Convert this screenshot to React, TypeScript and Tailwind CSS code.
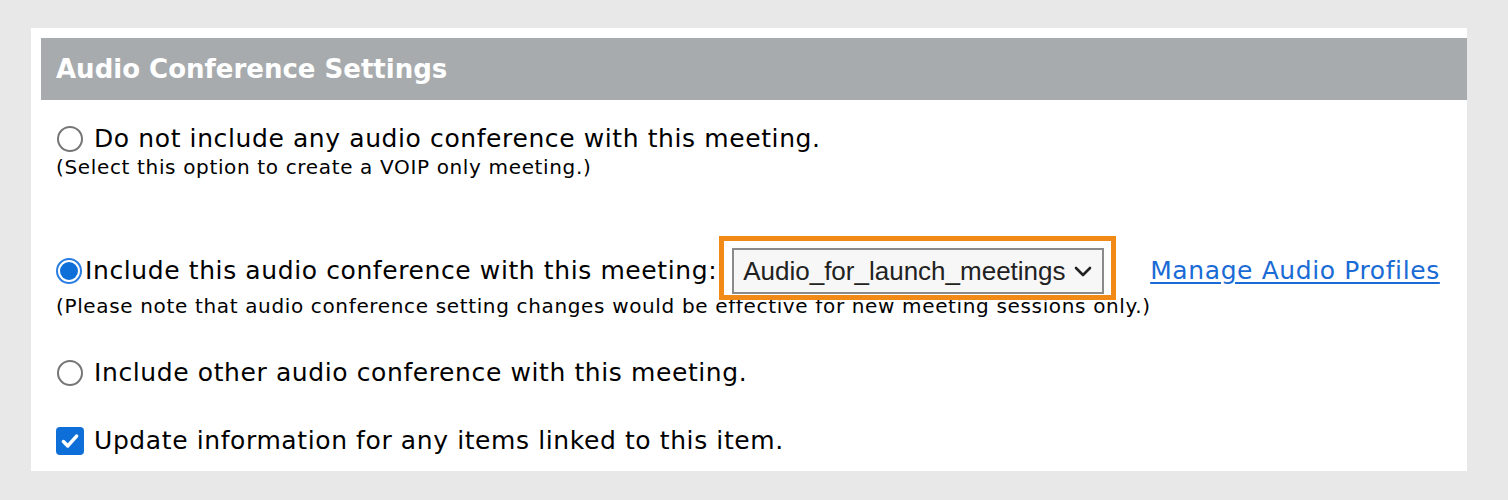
import React from "react";

const Radio = ({ checked = false }: { checked?: boolean }) =>
  checked ? (
    <span className="inline-flex h-[26px] w-[26px] shrink-0 items-center justify-center rounded-full border-[2px] border-[#2a7de1] bg-white">
      <span className="h-[18px] w-[18px] rounded-full bg-[#0f6fd8]" />
    </span>
  ) : (
    <span className="inline-block h-[26px] w-[26px] shrink-0 rounded-full border-[2px] border-[#767676] bg-white" />
  );

const Checkbox = () => (
  <span className="inline-flex h-[28px] w-[28px] shrink-0 items-center justify-center rounded-[4px] bg-[#0f6fd8]">
    <svg width="22" height="22" viewBox="0 0 20 20" fill="none">
      <path d="M4 10.5l4 4 8-9" stroke="white" strokeWidth="3.2" strokeLinecap="round" strokeLinejoin="round" />
    </svg>
  </span>
);

export default function App() {
  return (
    <div className="h-[500px] w-[1508px] bg-[#e8e8e8] pt-[28px] pl-[31px] font-['DejaVu_Sans',Verdana,sans-serif] text-black">
      <div className="h-[443px] w-[1436px] bg-white pt-[10px] pl-[10px]">
        <div className="flex h-[62px] items-center bg-[#a7abae] pl-[15px]">
          <h2 className="text-[26px] font-bold text-white">Audio Conference Settings</h2>
        </div>

        <div className="pl-[15px]">
          <div className="mt-[22px] flex items-center gap-[11px] pl-[1px]">
            <Radio />
            <span className="text-[25px] leading-[34px] tracking-[0.6px]">Do not include any audio conference with this meeting.</span>
          </div>
          <p className="text-[20px] leading-[22px] tracking-[0.65px]">(Select this option to create a VOIP only meeting.)</p>

          <div className="mt-[70px] flex items-center">
            <Radio checked />
            <span className="ml-[3px] text-[25px] leading-[34px] tracking-[0.6px]">Include this audio conference with this meeting:</span>
            <div className="relative z-10 ml-[15px] flex h-[46px] w-[372px] items-center justify-between border-[2px] border-[#8a8a8a] bg-[#f7f7f7] pl-[9px] pr-[9px]">
              <span className="font-['Liberation_Sans',Arial,sans-serif] text-[26px] text-[#222]">Audio_for_launch_meetings</span>
              <svg width="20" height="20" viewBox="0 0 20 20" fill="none">
                <path d="M3 7l7 7 7-7" stroke="#222" strokeWidth="2.6" strokeLinecap="round" strokeLinejoin="round" />
              </svg>
              <span className="pointer-events-none absolute -top-[14px] -left-[15px] -right-[14px] -bottom-[8px] border-[5px] border-[#f28a17]" />
            </div>
            <a href="#" className="ml-[46px] text-[25px] tracking-[0.6px] text-[#1a6bd5] underline underline-offset-[3px]">
              Manage Audio Profiles
            </a>
          </div>
          <p className="text-[20px] leading-[24px] tracking-[0.65px]">(Please note that audio conference setting changes would be effective for new meeting sessions only.)</p>

          <div className="mt-[38px] flex items-center gap-[11px] pl-[1px]">
            <Radio />
            <span className="text-[25px] leading-[34px] tracking-[0.6px]">Include other audio conference with this meeting.</span>
          </div>

          <div className="mt-[34px] flex items-center gap-[10px]">
            <Checkbox />
            <span className="text-[25px] leading-[34px] tracking-[0.6px]">Update information for any items linked to this item.</span>
          </div>
        </div>
      </div>
    </div>
  );
}
